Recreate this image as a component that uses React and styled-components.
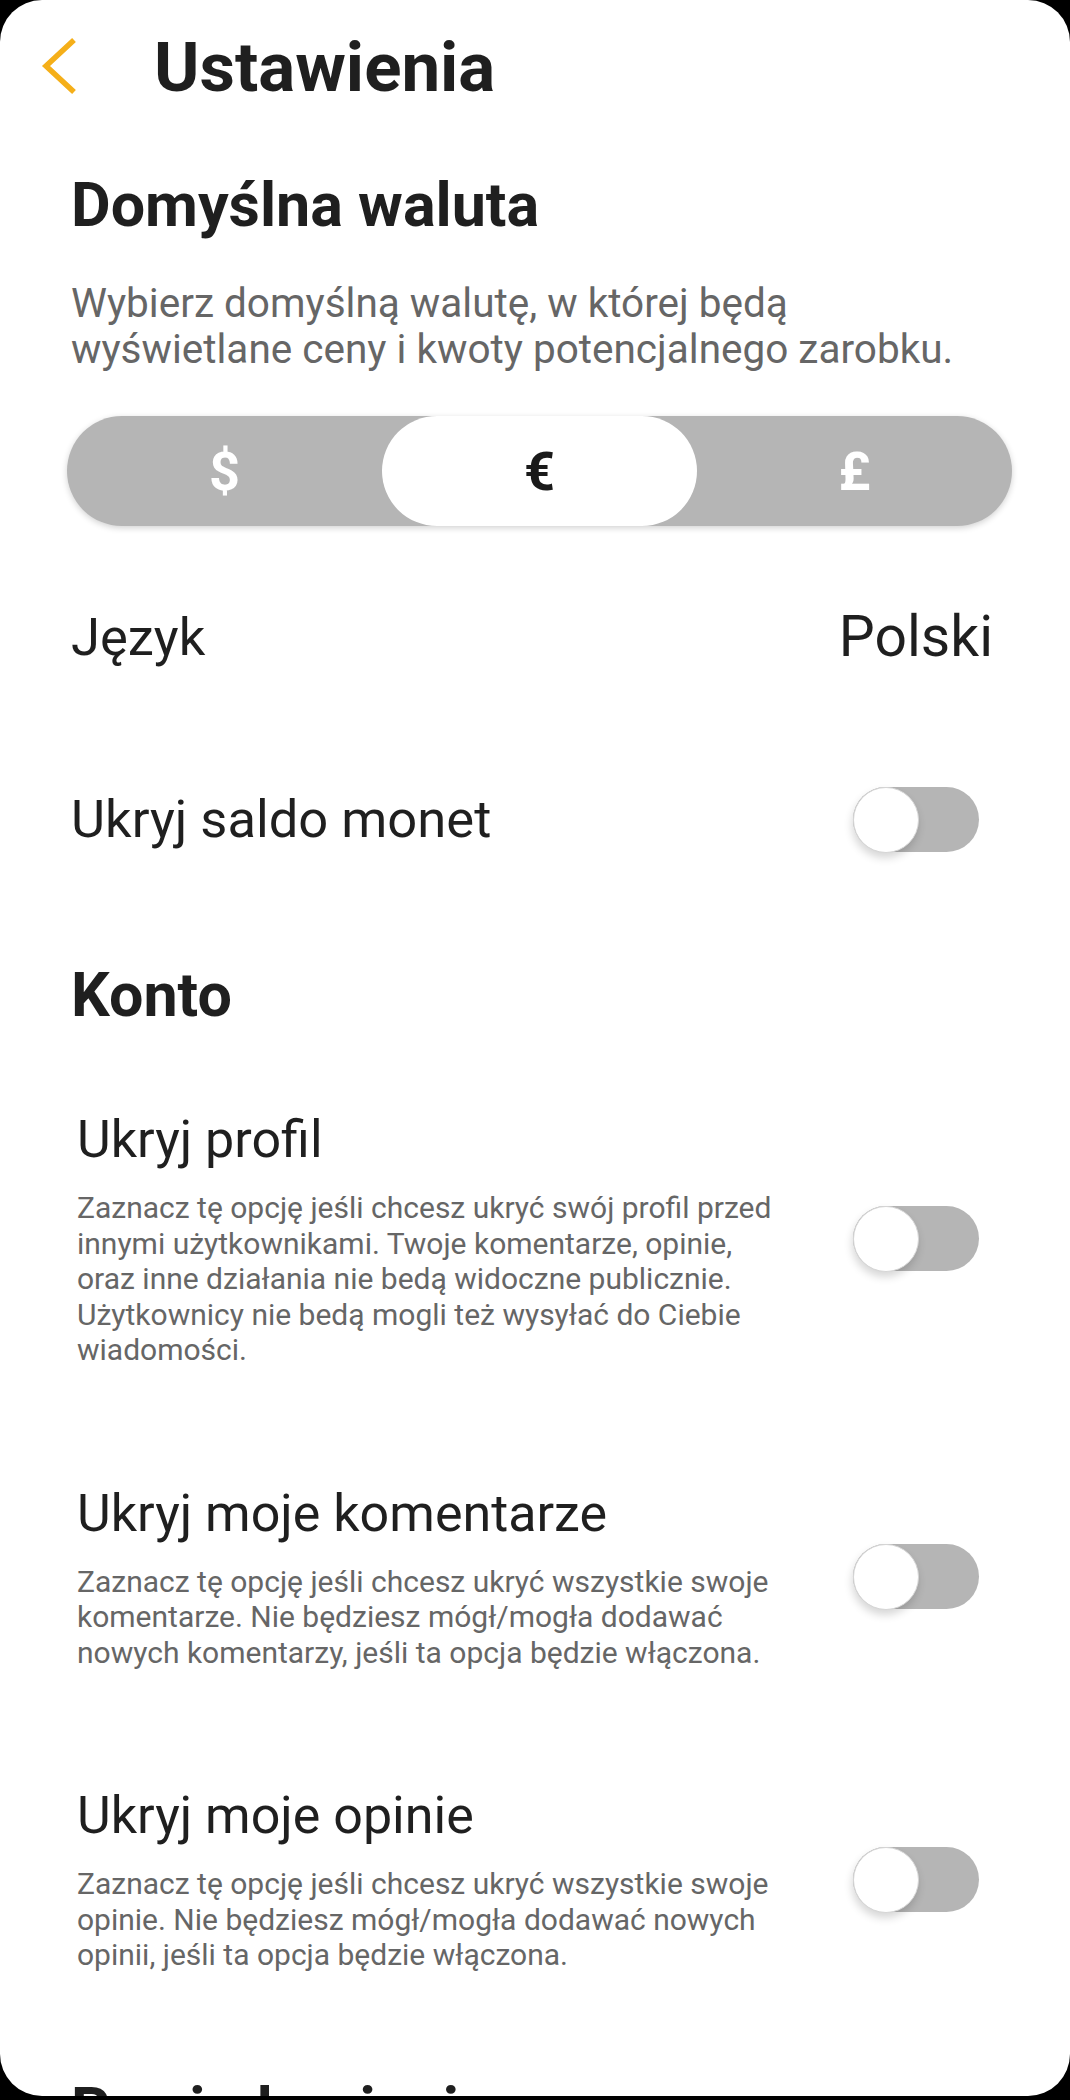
import React, { useState } from "react";
import styled, { createGlobalStyle } from "styled-components";

const GlobalStyle = createGlobalStyle`
  html, body {
    margin: 0;
    padding: 0;
    background: #000;
  }
  body {
    font-family: Roboto, "Noto Sans", sans-serif;
  }
`;

const CURRENCIES = ["$", "€", "£"];

const PRIVACY = [
  {
    id: "profile",
    title: "Ukryj profil",
    lines: [
      "Zaznacz tę opcję jeśli chcesz ukryć swój profil przed",
      "innymi użytkownikami. Twoje komentarze, opinie,",
      "oraz inne działania nie bedą widoczne publicznie.",
      "Użytkownicy nie bedą mogli też wysyłać do Ciebie",
      "wiadomości.",
    ],
  },
  {
    id: "comments",
    title: "Ukryj moje komentarze",
    lines: [
      "Zaznacz tę opcję jeśli chcesz ukryć wszystkie swoje",
      "komentarze. Nie będziesz mógł/mogła dodawać",
      "nowych komentarzy, jeśli ta opcja będzie włączona.",
    ],
  },
  {
    id: "reviews",
    title: "Ukryj moje opinie",
    lines: [
      "Zaznacz tę opcję jeśli chcesz ukryć wszystkie swoje",
      "opinie. Nie będziesz mógł/mogła dodawać nowych",
      "opinii, jeśli ta opcja będzie włączona.",
    ],
  },
];

const Toggle = ({ on, onChange }) => (
  <Track $on={on} onClick={() => onChange(!on)}>
    <Knob $on={on} />
  </Track>
);

const App = () => {
  const [currency, setCurrency] = useState(1);
  const [hideBalance, setHideBalance] = useState(false);
  const [privacy, setPrivacy] = useState({});

  const setFlag = (id, value) => setPrivacy((p) => ({ ...p, [id]: value }));

  return (
    <>
      <GlobalStyle />
      <Screen>
        <Header>
          <BackButton aria-label="Wstecz">
            <svg width="40" height="58" viewBox="0 0 40 58">
              <polyline
                points="34,3 6,29 34,55"
                fill="none"
                stroke="#F5AF19"
                strokeWidth="5.5"
              />
            </svg>
          </BackButton>
          <Title>Ustawienia</Title>
        </Header>

        <Content>
          <SectionTitle $mt={62}>Domyślna waluta</SectionTitle>
          <Lead>
            Wybierz domyślną walutę, w której będą
            <br />
            wyświetlane ceny i kwoty potencjalnego zarobku.
          </Lead>

          <Segmented>
            {CURRENCIES.map((c, i) => (
              <Segment
                key={c}
                $active={currency === i}
                onClick={() => setCurrency(i)}
              >
                {c}
              </Segment>
            ))}
          </Segmented>

          <ValueRow>
            <RowLabel>Język</RowLabel>
            <RowValue>Polski</RowValue>
          </ValueRow>

          <SwitchRow>
            <RowLabel>Ukryj saldo monet</RowLabel>
            <Toggle on={hideBalance} onChange={setHideBalance} />
          </SwitchRow>

          <SectionTitle $mt={108}>Konto</SectionTitle>

          {PRIVACY.map((item, i) => (
            <OptionRow key={item.id} $mt={i === 0 ? 80 : 116}>
              <OptionText>
                <OptionTitle>{item.title}</OptionTitle>
                <OptionDesc>
                  {item.lines.map((line, j) => (
                    <span key={j}>
                      {line}
                      {j < item.lines.length - 1 && <br />}
                    </span>
                  ))}
                </OptionDesc>
              </OptionText>
              <Toggle
                on={!!privacy[item.id]}
                onChange={(v) => setFlag(item.id, v)}
              />
            </OptionRow>
          ))}

          <SectionTitle $mt={102}>Powiadomienia</SectionTitle>
        </Content>
      </Screen>
    </>
  );
};

// Styled Components
const Screen = styled.div`
  width: 1070px;
  height: 2096px;
  background: #fff;
  border-radius: 42px;
  overflow: hidden;
`;

const Header = styled.div`
  display: flex;
  align-items: center;
  gap: 74px;
  height: 80px;
  padding: 28px 0 0 40px;
`;

const BackButton = styled.button`
  border: none;
  background: none;
  padding: 0;
  margin-top: -5px;
  display: flex;
  cursor: pointer;
`;

const Title = styled.h1`
  margin: 0;
  font-size: 69px;
  line-height: 80px;
  font-weight: 700;
  color: #1f1f1f;
`;

const Content = styled.div`
  display: flex;
  flex-direction: column;
  padding: 0 58px 0 67px;
`;

const SectionTitle = styled.h2`
  margin: ${(p) => p.$mt}px 0 0;
  padding-left: 4px;
  font-size: 61px;
  line-height: 70px;
  font-weight: 700;
  color: #1f1f1f;
  white-space: nowrap;
`;

const Lead = styled.p`
  margin: 40px 0 0;
  padding-left: 4px;
  font-size: 40.5px;
  line-height: 46px;
  color: #666;
  white-space: nowrap;
`;

const Segmented = styled.div`
  margin-top: 44px;
  height: 110px;
  display: grid;
  grid-template-columns: repeat(3, 1fr);
  background: #b5b5b5;
  border-radius: 55px;
  box-shadow: 0 2px 6px rgba(0, 0, 0, 0.18);
`;

const Segment = styled.button`
  border: none;
  border-radius: 55px;
  padding: 0;
  font-family: Roboto, sans-serif;
  font-size: 54px;
  font-weight: 700;
  cursor: pointer;
  background: ${(p) => (p.$active ? "#fff" : "transparent")};
  color: ${(p) => (p.$active ? "#1a1a1a" : "#fff")};
`;

const ValueRow = styled.div`
  margin-top: 76px;
  display: flex;
  justify-content: space-between;
  align-items: center;
  height: 70px;
  padding: 0 19px 0 4px;
`;

const SwitchRow = styled.div`
  margin-top: 114px;
  display: flex;
  justify-content: space-between;
  align-items: center;
  height: 66px;
  padding: 0 33px 0 4px;
`;

const RowLabel = styled.span`
  font-size: 52.5px;
  line-height: 66px;
  color: #1f1f1f;
`;

const RowValue = styled.span`
  font-size: 57px;
  line-height: 70px;
  color: #1f1f1f;
`;

const OptionRow = styled.div`
  margin-top: ${(p) => p.$mt}px;
  display: flex;
  justify-content: space-between;
  align-items: center;
  padding: 0 33px 0 10px;
`;

const OptionText = styled.div`
  display: flex;
  flex-direction: column;
  gap: 20px;
`;

const OptionTitle = styled.div`
  font-size: 52px;
  line-height: 60px;
  color: #1f1f1f;
`;

const OptionDesc = styled.div`
  font-size: 30px;
  line-height: 35.5px;
  color: #666;
  white-space: nowrap;
`;

const Track = styled.div`
  position: relative;
  flex-shrink: 0;
  width: 126px;
  height: 65px;
  border-radius: 33px;
  background: ${(p) => (p.$on ? "#F5AF19" : "#b5b5b5")};
  cursor: pointer;
`;

const Knob = styled.div`
  position: absolute;
  top: 0;
  left: ${(p) => (p.$on ? "60px" : "0")};
  width: 66px;
  height: 66px;
  box-sizing: border-box;
  border-radius: 50%;
  background: #fff;
  border: 1px solid #d6d6d6;
  box-shadow: -1px 5px 9px rgba(0, 0, 0, 0.16);
`;

export default App;
